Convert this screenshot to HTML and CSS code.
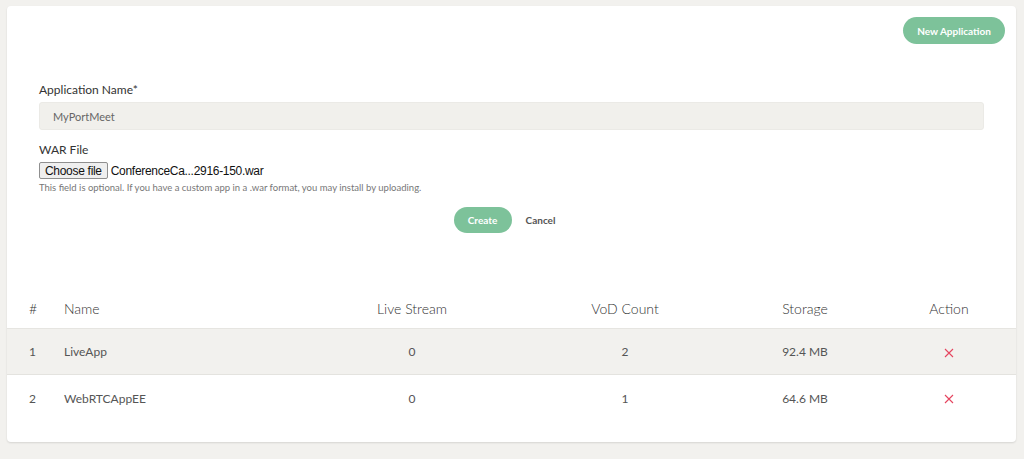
FILE: index.html
```html
<!DOCTYPE html>
<html>
<head>
<meta charset="utf-8">
<link rel="stylesheet" href="styles.css">
</head>
<body>
<div class="card">
  <div class="top-bar">
    <button class="btn-green btn-new">New Application</button>
  </div>
  <form class="form">
    <label class="label">Application Name*</label>
    <div class="input">MyPortMeet</div>
    <label class="label label-war">WAR File</label>
    <div class="file-row">
      <span class="file-btn">Choose file</span>
      <span class="file-name">ConferenceCa...2916-150.war</span>
    </div>
    <p class="help">This field is optional. If you have a custom app in a .war format, you may install by uploading.</p>
    <div class="actions">
      <span class="btn-green btn-create">Create</span>
      <span class="btn-cancel">Cancel</span>
    </div>
  </form>
  <div class="table">
    <div class="row head">
      <div class="c-num">#</div>
      <div class="c-name">Name</div>
      <div class="c-mid">Live Stream</div>
      <div class="c-mid">VoD Count</div>
      <div class="c-mid">Storage</div>
      <div class="c-mid">Action</div>
    </div>
    <div class="row body shaded">
      <div class="c-num">1</div>
      <div class="c-name">LiveApp</div>
      <div class="c-mid">0</div>
      <div class="c-mid">2</div>
      <div class="c-mid">92.4 MB</div>
      <div class="c-mid"><svg class="x" viewBox="0 0 10 10" width="10" height="10"><path d="M1 1 L9 9 M9 1 L1 9" stroke="#e5455f" stroke-width="1.1" fill="none"/></svg></div>
    </div>
    <div class="row body">
      <div class="c-num">2</div>
      <div class="c-name">WebRTCAppEE</div>
      <div class="c-mid">0</div>
      <div class="c-mid">1</div>
      <div class="c-mid">64.6 MB</div>
      <div class="c-mid"><svg class="x" viewBox="0 0 10 10" width="10" height="10"><path d="M1 1 L9 9 M9 1 L1 9" stroke="#e5455f" stroke-width="1.1" fill="none"/></svg></div>
    </div>
  </div>
</div>
</body>
</html>
```

FILE: styles.css
```css
* { box-sizing: border-box; }
html, body { margin: 0; padding: 0; }
body {
  background: #f2f1ee;
  font-family: Lato, "Open Sans", sans-serif;
  color: #333;
  height: 459px;
  overflow: hidden;
}
.card {
  margin: 6px 0 0 7px;
  width: 1009px;
  background: #fff;
  border-radius: 4px;
  box-shadow: 0 1px 2px rgba(0,0,0,0.12);
  padding: 11px 0 21px;
}
.top-bar {
  display: flex;
  justify-content: flex-end;
  padding-right: 11px;
}
.btn-green {
  display: inline-flex;
  align-items: center;
  justify-content: center;
  background: #7dc29a;
  color: #fff;
  font-family: Lato, sans-serif;
  font-weight: 700;
  font-size: 10px;
  border: none;
  border-radius: 14px;
}
.btn-new {
  width: 102px;
  height: 27px;
  padding: 0;
}
.form {
  margin: 38px 0 0;
  padding: 0 32px;
  display: flex;
  flex-direction: column;
}
.label {
  font-size: 12px;
  line-height: 16px;
  color: #333;
}
.input {
  margin-top: 4px;
  height: 28px;
  background: #f1f0ec;
  border: 1px solid #ebeae6;
  border-radius: 3px;
  font-size: 11px;
  color: #666;
  padding-left: 13px;
  display: flex;
  align-items: center;
}
.label-war { margin-top: 12px; }
.file-row {
  margin-top: 4px;
  display: flex;
  align-items: center;
  height: 17px;
}
.file-btn {
  font-family: "Liberation Sans", Arial, sans-serif;
  font-size: 12px;
  letter-spacing: -0.3px;
  color: #111;
  background: #efefef;
  border: 1px solid #8f8f8f;
  border-radius: 2px;
  height: 17px;
  padding: 0 5px;
  display: inline-flex;
  align-items: center;
}
.file-name {
  font-family: "Liberation Sans", Arial, sans-serif;
  font-size: 12px;
  letter-spacing: -0.3px;
  color: #111;
  margin-left: 3px;
}
.help {
  margin: 3px 0 0;
  font-size: 9.5px;
  line-height: 12px;
  color: #777;
}
.actions {
  margin-top: 13px;
  display: flex;
  justify-content: center;
  align-items: center;
  gap: 14px;
  padding-right: 14px;
}
.btn-create {
  width: 58px;
  height: 26px;
}
.btn-cancel {
  font-size: 10px;
  font-weight: 700;
  color: #555;
}
.table {
  margin-top: 55px;
}
.row {
  display: grid;
  grid-template-columns: 45px 250px 220px 206px 154px 134px;
  align-items: center;
}
.head {
  height: 41px;
  border-bottom: 1px solid #e6e5e1;
  font-size: 14px;
  font-weight: 300;
  color: #333;
}
.body {
  height: 46px;
  font-size: 12px;
  color: #555;
}
.shaded {
  background: #f2f1ee;
  border-bottom: 1px solid #e4e3df;
}
.c-num { padding-left: 22px; }
.c-name { padding-left: 12px; }
.c-mid { text-align: center; }
.x { display: inline-block; vertical-align: middle; }
```
